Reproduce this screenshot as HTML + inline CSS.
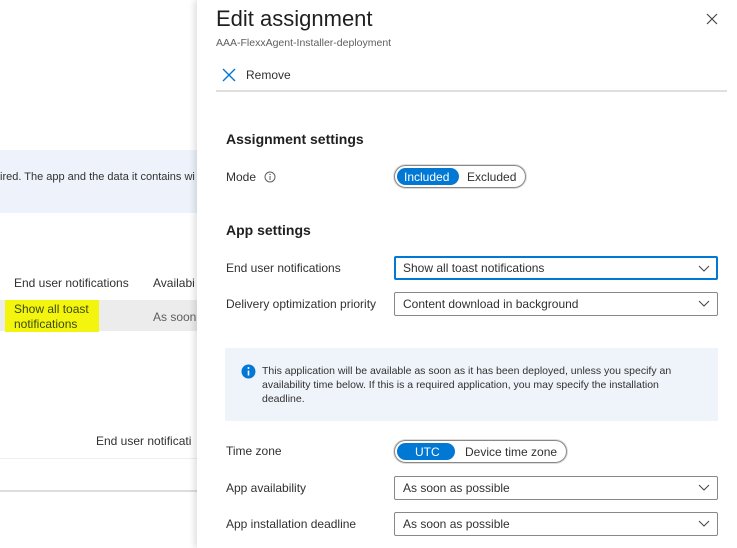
<!DOCTYPE html>
<html><head><meta charset="utf-8"><style>
*{margin:0;padding:0;box-sizing:border-box}
body{width:737px;height:548px;overflow:hidden;background:#fff;font-family:"Liberation Sans",sans-serif;color:#323130;position:relative}
.a{position:absolute;white-space:nowrap}
.t{font-size:12px}
.sel{position:absolute;left:394px;width:324px;height:24px;border:1px solid #8a8886;border-radius:2px;font-size:12px;padding:4px 8px;color:#323130}
.sel svg{position:absolute;right:7px;top:7px}
</style></head><body>
<div class="a" style="left:0;top:150px;width:200px;height:63px;background:#eef3fb"></div>
<div class="a t" style="left:0;top:171px;font-size:11px">ired. The app and the data it contains wi</div>
<div class="a t" style="left:14px;top:276px">End user notifications</div>
<div class="a t" style="left:153px;top:276px">Availabi</div>
<div class="a" style="left:0;top:300px;width:200px;height:31px;background:#ececec"></div>
<div class="a" style="left:5px;top:300px;width:94px;height:32px;background:#f4f50e"></div>
<div class="a t" style="left:14px;top:302px;line-height:15px;color:#3b4a10">Show all toast<br>notifications</div>
<div class="a t" style="left:153px;top:310px;color:#605e5c">As soon</div>
<div class="a t" style="left:96px;top:434px">End user notificati</div>
<div class="a" style="left:0;top:458px;width:200px;height:1px;background:#eee"></div>
<div class="a" style="left:0;top:490px;width:200px;height:2px;background:#ddd"></div>
<div class="a" style="left:197px;top:0;width:540px;height:548px;background:#fff;box-shadow:-3px 0 6px rgba(0,0,0,0.12)"></div>
<div class="a" style="left:216px;top:6px;font-size:22px;color:#201f1e">Edit assignment</div>
<div class="a" style="left:216px;top:37px;font-size:10.5px;color:#605e5c">AAA-FlexxAgent-Installer-deployment</div>
<svg class="a" style="left:706px;top:13px" width="12" height="12"><path d="M1 1L11 11M11 1L1 11" stroke="#444" stroke-width="1.2"/></svg>
<svg class="a" style="left:222px;top:68px" width="14" height="14"><path d="M1 1L13 13M13 1L1 13" stroke="#0078d4" stroke-width="1.4"/></svg>
<div class="a t" style="left:246px;top:68px">Remove</div>
<div class="a" style="left:216px;top:90px;width:511px;height:2px;background:#e1dfdd"></div>
<div class="a" style="left:226px;top:131px;font-size:14px;font-weight:bold;color:#201f1e">Assignment settings</div>
<div class="a t" style="left:226px;top:170px">Mode</div>
<svg class="a" style="left:264px;top:171px" width="12" height="12"><circle cx="6" cy="6" r="5" fill="none" stroke="#605e5c"/><path d="M6 5v4" stroke="#605e5c"/><circle cx="6" cy="3.4" r=".7" fill="#605e5c"/></svg>
<div class="a" style="left:394px;top:165px;width:132px;height:23px;border:1px solid #8a8886;border-radius:12px;box-shadow:0 0 0 1px #ddd"></div>
<div class="a" style="left:397px;top:168px;width:62px;height:17px;background:#0078d4;border-radius:9px"></div>
<div class="a t" style="left:404px;top:170px;color:#fff">Included</div>
<div class="a t" style="left:467px;top:170px">Excluded</div>
<div class="a" style="left:226px;top:222px;font-size:14px;font-weight:bold;color:#201f1e">App settings</div>
<div class="a t" style="left:226px;top:261px">End user notifications</div>
<div class="sel" style="top:256px;border:2px solid #0078d4;padding:3px 7px">Show all toast notifications<svg width="12" height="8" style="right:6px;top:7px"><path d="M1 1L6 6L11 1" stroke="#444" fill="none"/></svg></div>
<div class="a t" style="left:226px;top:297px">Delivery optimization priority</div>
<div class="sel" style="top:292px">Content download in background<svg width="12" height="8"><path d="M1 1L6 6L11 1" stroke="#444" fill="none"/></svg></div>
<div class="a" style="left:225px;top:348px;width:493px;height:73px;background:#eff4fb"></div>
<svg class="a" style="left:241px;top:364px" width="15" height="15"><circle cx="7.5" cy="7.5" r="7" fill="#0078d4"/><path d="M7.5 6.5v5" stroke="#fff" stroke-width="1.6"/><circle cx="7.5" cy="4" r="1" fill="#fff"/></svg>
<div class="a" style="left:262px;top:364px;font-size:10.5px;line-height:14px">This application will be available as soon as it has been deployed, unless you specify an<br>availability time below. If this is a required application, you may specify the installation<br>deadline.</div>
<div class="a t" style="left:226px;top:444px">Time zone</div>
<div class="a" style="left:394px;top:440px;width:173px;height:23px;border:1px solid #8a8886;border-radius:12px;box-shadow:0 0 0 1px #ddd"></div>
<div class="a" style="left:397px;top:443px;width:58px;height:17px;background:#0078d4;border-radius:9px"></div>
<div class="a t" style="left:415px;top:445px;color:#fff">UTC</div>
<div class="a t" style="left:465px;top:445px">Device time zone</div>
<div class="a t" style="left:226px;top:481px">App availability</div>
<div class="sel" style="top:476px">As soon as possible<svg width="12" height="8"><path d="M1 1L6 6L11 1" stroke="#444" fill="none"/></svg></div>
<div class="a t" style="left:226px;top:517px">App installation deadline</div>
<div class="sel" style="top:512px">As soon as possible<svg width="12" height="8"><path d="M1 1L6 6L11 1" stroke="#444" fill="none"/></svg></div>
</body></html>
